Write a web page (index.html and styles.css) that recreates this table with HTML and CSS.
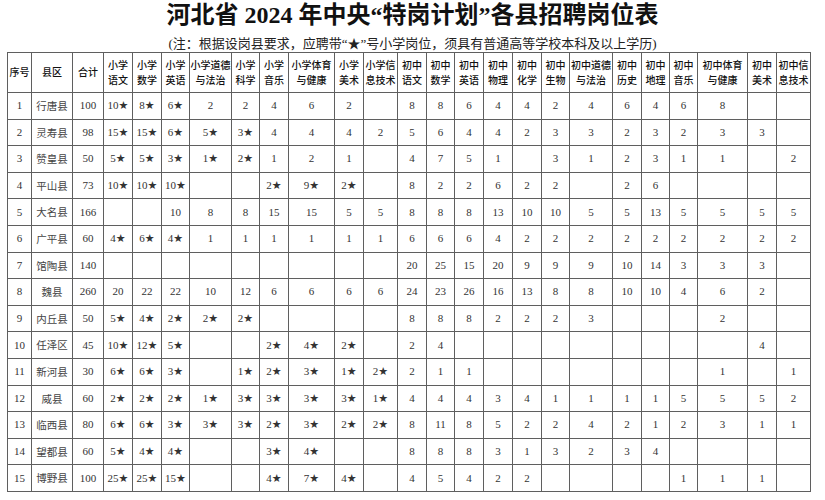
FILE: index.html
```html
<!DOCTYPE html>
<html lang="zh-CN">
<head>
<meta charset="utf-8">
<title>河北省 2024 年中央“特岗计划”各县招聘岗位表</title>
<link rel="stylesheet" href="styles.css">
</head>
<body>
<div class="page">
  <h1 class="title">河北省 2024 年中央“特岗计划”各县招聘岗位表</h1>
  <p class="note">(注：根据设岗县要求，应聘带“★”号小学岗位，须具有普通高等学校本科及以上学历)</p>
  <table class="grid">
    <colgroup>
      <col style="width:24px"><col style="width:41px"><col style="width:31px">
      <col style="width:29px"><col style="width:29px"><col style="width:28px"><col style="width:42px">
      <col style="width:28px"><col style="width:29px"><col style="width:46px"><col style="width:29px"><col style="width:34px">
      <col style="width:29px"><col style="width:28px"><col style="width:29px"><col style="width:29px"><col style="width:29px">
      <col style="width:28px"><col style="width:43px"><col style="width:29px"><col style="width:28px"><col style="width:28px">
      <col style="width:50px"><col style="width:29px"><col style="width:34px">
    </colgroup>
    <thead>
      <tr>
        <th>序号</th><th>县区</th><th>合计</th>
        <th>小学<br>语文</th><th>小学<br>数学</th><th>小学<br>英语</th><th>小学道德<br>与法治</th>
        <th>小学<br>科学</th><th>小学<br>音乐</th><th>小学体育<br>与健康</th><th>小学<br>美术</th><th>小学信<br>息技术</th>
        <th>初中<br>语文</th><th>初中<br>数学</th><th>初中<br>英语</th><th>初中<br>物理</th><th>初中<br>化学</th>
        <th>初中<br>生物</th><th>初中道德<br>与法治</th><th>初中<br>历史</th><th>初中<br>地理</th><th>初中<br>音乐</th>
        <th>初中体育<br>与健康</th><th>初中<br>美术</th><th>初中信<br>息技术</th>
      </tr>
    </thead>
    <tbody>
      <tr><td>1</td><td class="county">行唐县</td><td>100</td><td>10★</td><td>8★</td><td>6★</td><td>2</td><td>2</td><td>4</td><td>6</td><td>2</td><td></td><td>8</td><td>8</td><td>6</td><td>4</td><td>4</td><td>2</td><td>4</td><td>6</td><td>4</td><td>6</td><td>8</td><td></td><td></td></tr>
      <tr><td>2</td><td class="county">灵寿县</td><td>98</td><td>15★</td><td>15★</td><td>6★</td><td>5★</td><td>3★</td><td>4</td><td>4</td><td>4</td><td>2</td><td>5</td><td>6</td><td>4</td><td>4</td><td>2</td><td>3</td><td>3</td><td>2</td><td>3</td><td>2</td><td>3</td><td>3</td><td></td></tr>
      <tr><td>3</td><td class="county">赞皇县</td><td>50</td><td>5★</td><td>5★</td><td>3★</td><td>1★</td><td>2★</td><td>1</td><td>2</td><td>1</td><td></td><td>4</td><td>7</td><td>5</td><td>1</td><td></td><td>3</td><td>1</td><td>2</td><td>3</td><td>1</td><td>1</td><td></td><td>2</td></tr>
      <tr><td>4</td><td class="county">平山县</td><td>73</td><td>10★</td><td>10★</td><td>10★</td><td></td><td></td><td>2★</td><td>9★</td><td>2★</td><td></td><td>8</td><td>2</td><td>2</td><td>6</td><td>2</td><td>2</td><td></td><td>2</td><td>6</td><td></td><td></td><td></td><td></td></tr>
      <tr><td>5</td><td class="county">大名县</td><td>166</td><td></td><td></td><td>10</td><td>8</td><td>8</td><td>15</td><td>15</td><td>5</td><td>5</td><td>8</td><td>8</td><td>8</td><td>13</td><td>10</td><td>10</td><td>5</td><td>5</td><td>13</td><td>5</td><td>5</td><td>5</td><td>5</td></tr>
      <tr><td>6</td><td class="county">广平县</td><td>60</td><td>4★</td><td>6★</td><td>4★</td><td>1</td><td>1</td><td>1</td><td>1</td><td>1</td><td>1</td><td>6</td><td>6</td><td>6</td><td>4</td><td>2</td><td>2</td><td>2</td><td>2</td><td>2</td><td>2</td><td>2</td><td>2</td><td>2</td></tr>
      <tr><td>7</td><td class="county">馆陶县</td><td>140</td><td></td><td></td><td></td><td></td><td></td><td></td><td></td><td></td><td></td><td>20</td><td>25</td><td>15</td><td>20</td><td>9</td><td>9</td><td>9</td><td>10</td><td>14</td><td>3</td><td>3</td><td>3</td><td></td></tr>
      <tr><td>8</td><td class="county">魏县</td><td>260</td><td>20</td><td>22</td><td>22</td><td>10</td><td>12</td><td>6</td><td>6</td><td>6</td><td>6</td><td>24</td><td>23</td><td>26</td><td>16</td><td>13</td><td>8</td><td>8</td><td>10</td><td>10</td><td>4</td><td>6</td><td>2</td><td></td></tr>
      <tr><td>9</td><td class="county">内丘县</td><td>50</td><td>5★</td><td>4★</td><td>2★</td><td>2★</td><td>2★</td><td></td><td></td><td></td><td></td><td>8</td><td>8</td><td>8</td><td>2</td><td>2</td><td>2</td><td>3</td><td></td><td></td><td></td><td>2</td><td></td><td></td></tr>
      <tr><td>10</td><td class="county">任泽区</td><td>45</td><td>10★</td><td>12★</td><td>5★</td><td></td><td></td><td>2★</td><td>4★</td><td>2★</td><td></td><td>2</td><td>4</td><td></td><td></td><td></td><td></td><td></td><td></td><td></td><td></td><td></td><td>4</td><td></td></tr>
      <tr><td>11</td><td class="county">新河县</td><td>30</td><td>6★</td><td>6★</td><td>3★</td><td></td><td>1★</td><td>2★</td><td>3★</td><td>1★</td><td>2★</td><td>2</td><td>1</td><td>1</td><td></td><td></td><td></td><td></td><td></td><td></td><td></td><td>1</td><td></td><td>1</td></tr>
      <tr><td>12</td><td class="county">威县</td><td>60</td><td>2★</td><td>2★</td><td>2★</td><td>1★</td><td>3★</td><td>3★</td><td>3★</td><td>3★</td><td>1★</td><td>4</td><td>4</td><td>4</td><td>3</td><td>4</td><td>1</td><td>1</td><td>1</td><td>1</td><td>5</td><td>5</td><td>5</td><td>2</td></tr>
      <tr><td>13</td><td class="county">临西县</td><td>80</td><td>6★</td><td>6★</td><td>3★</td><td>3★</td><td>3★</td><td>2★</td><td>3★</td><td>2★</td><td>2★</td><td>8</td><td>11</td><td>8</td><td>5</td><td>2</td><td>2</td><td>4</td><td>2</td><td>1</td><td>2</td><td>3</td><td>1</td><td>1</td></tr>
      <tr><td>14</td><td class="county">望都县</td><td>60</td><td>5★</td><td>4★</td><td>4★</td><td></td><td></td><td>3★</td><td>4★</td><td></td><td></td><td>8</td><td>8</td><td>8</td><td>3</td><td>1</td><td>3</td><td>2</td><td>3</td><td>4</td><td></td><td></td><td></td><td></td></tr>
      <tr><td>15</td><td class="county">博野县</td><td>100</td><td>25★</td><td>25★</td><td>15★</td><td></td><td></td><td>4★</td><td>7★</td><td>4★</td><td></td><td>4</td><td>5</td><td>4</td><td>2</td><td>2</td><td></td><td></td><td></td><td></td><td>1</td><td>1</td><td>1</td><td></td></tr>
    </tbody>
  </table>
</div>
</body>
</html>
```

FILE: styles.css
```css
html, body {
  margin: 0;
  padding: 0;
  background: #ffffff;
}

.page {
  width: 825px;
  font-family: "Liberation Serif", "Noto Sans CJK SC", serif;
  color: #222;
}

.title {
  margin: 0;
  text-align: center;
  font-family: "Liberation Serif", "Noto Sans CJK SC", serif;
  font-size: 24px;
  line-height: 30px;
  font-weight: 700;
  color: #111;
  white-space: nowrap;
}

.note {
  margin: 6px 0 0;
  text-align: center;
  font-family: "Liberation Serif", "Noto Sans CJK SC", serif;
  font-size: 13px;
  line-height: 16px;
  color: #222;
  white-space: nowrap;
}

.grid {
  margin-left: 7px;
  width: 803px;
  border-collapse: collapse;
  table-layout: fixed;
}

.grid th,
.grid td {
  border: 1px solid #5f5f5f;
  padding: 0;
  text-align: center;
  vertical-align: middle;
  white-space: nowrap;
  overflow: visible;
}

.grid thead tr {
  height: 40px;
}

.grid tbody tr {
  height: 26.6px;
}

.grid th {
  font-family: "Noto Sans CJK SC", sans-serif;
  font-size: 10px;
  line-height: 14.5px;
  font-weight: 500;
  color: #111;
}

.grid td {
  font-family: "Liberation Serif", "DejaVu Sans", "Noto Sans CJK SC", serif;
  font-size: 11px;
  line-height: 15px;
  color: #333;
}

.grid td.county {
  font-family: "Noto Sans CJK SC", sans-serif;
  font-size: 10.5px;
  line-height: 15.5px;
  color: #444;
}
```
